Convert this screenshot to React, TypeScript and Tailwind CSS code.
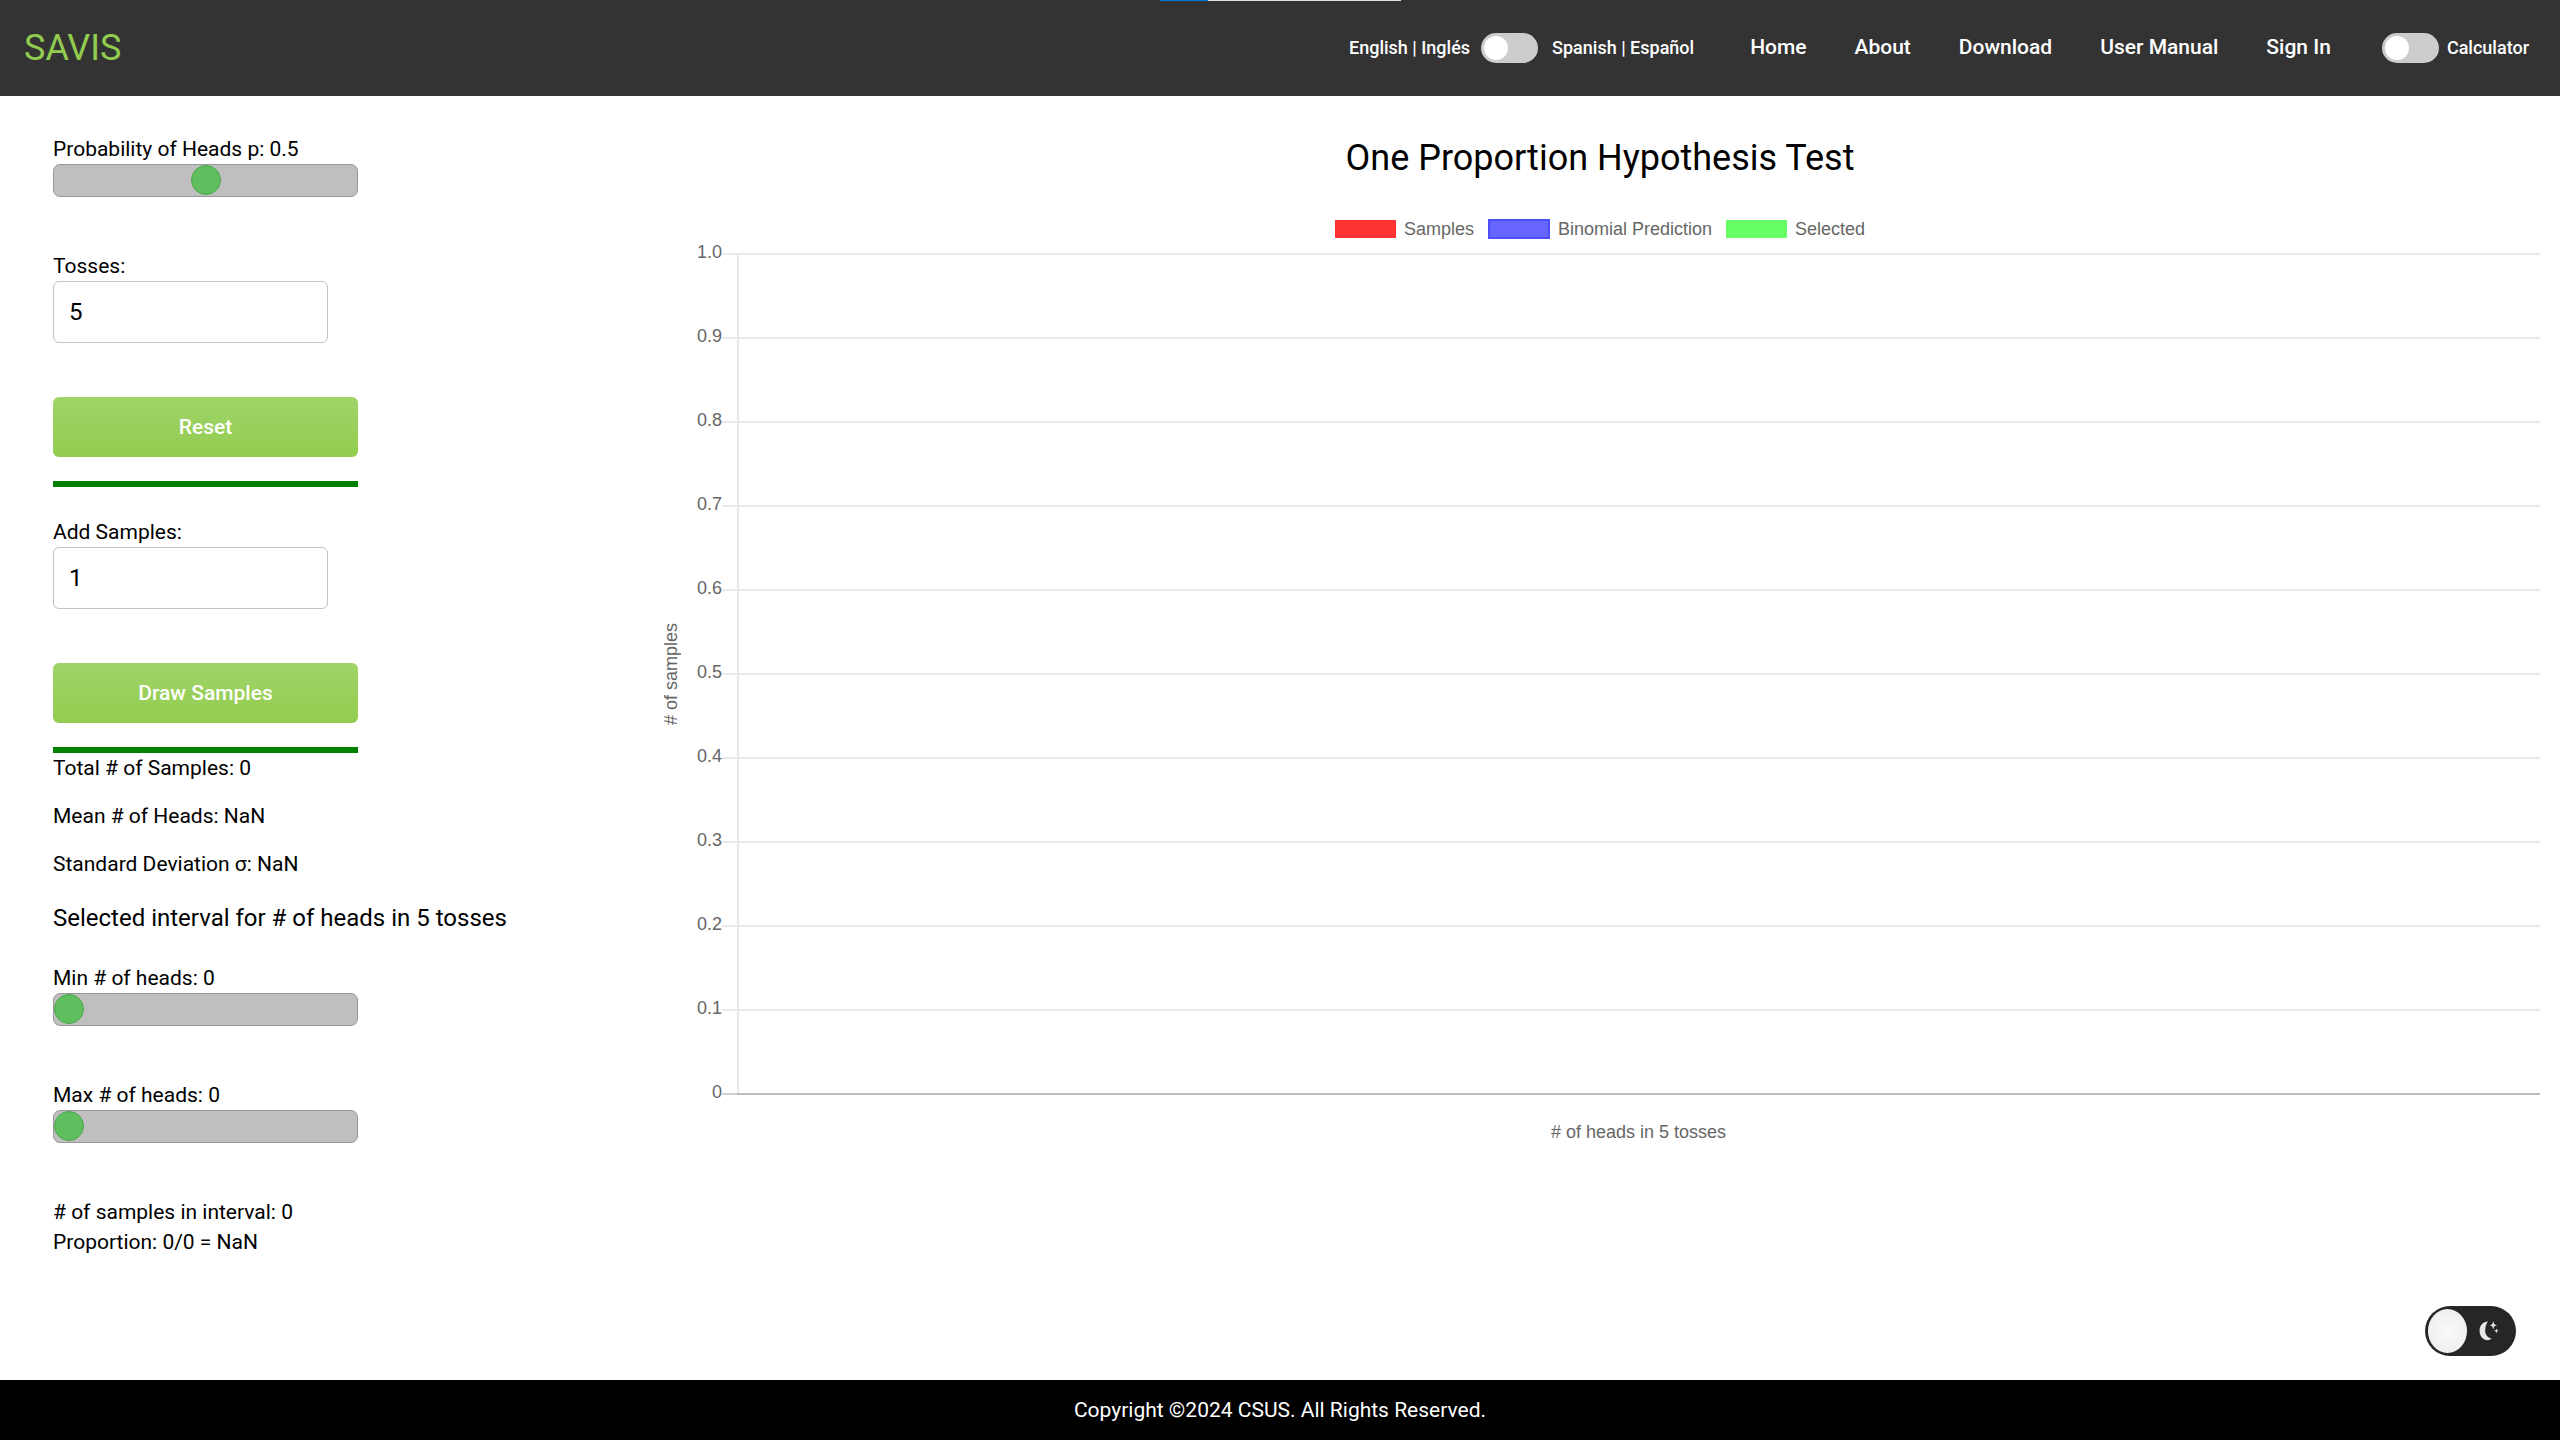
import { useState } from 'react';

const ROBOTO = "font-['Roboto',sans-serif]";
const ARIAL = "font-['Liberation_Sans',Arial,sans-serif]";

const TICKS = ['1.0', '0.9', '0.8', '0.7', '0.6', '0.5', '0.4', '0.3', '0.2', '0.1'];

function Switch({ id, label }: { id: string; label: string }) {
  return (
    <input
      id={id}
      type="checkbox"
      role="switch"
      aria-label={label}
      className="h-[30px] w-[57px] shrink-0 cursor-pointer appearance-none rounded-full bg-[#ccc] p-[3px] before:block before:size-6 before:rounded-full before:bg-white before:transition-transform checked:bg-[#92cc4f] checked:before:translate-x-[27px]"
    />
  );
}

function Slider(props: {
  id: string;
  label: string;
  value: number;
  max: number;
  step: number;
  onChange: (v: number) => void;
}) {
  return (
    <div className="flex flex-col">
      <label htmlFor={props.id}>
        {props.label} {props.value}
      </label>
      <input
        id={props.id}
        type="range"
        min={0}
        max={props.max}
        step={props.step}
        value={props.value}
        onChange={(e) => props.onChange(Number(e.target.value))}
        className="h-[33px] w-[305px] cursor-pointer appearance-none rounded-[7px] border border-[#989898] bg-[#bfbfbf] pb-px [&::-webkit-slider-thumb]:size-[30px] [&::-webkit-slider-thumb]:appearance-none [&::-webkit-slider-thumb]:rounded-full [&::-webkit-slider-thumb]:border [&::-webkit-slider-thumb]:border-[#4ca64c] [&::-webkit-slider-thumb]:bg-[#5fbf5f]"
      />
    </div>
  );
}

function NumberField(props: { id: string; label: string; value: number; onChange: (v: number) => void }) {
  return (
    <div className="flex flex-col">
      <label htmlFor={props.id}>{props.label}</label>
      <input
        id={props.id}
        type="number"
        value={props.value}
        onChange={(e) => props.onChange(Number(e.target.value))}
        className="h-[62px] w-[275px] rounded-md border border-[#c4c4c4] bg-white px-[15px] text-2xl"
      />
    </div>
  );
}

function ActionButton({ children }: { children: string }) {
  return (
    <button
      type="button"
      className="h-[60px] w-[305px] cursor-pointer rounded-md bg-linear-to-b from-[#a0d468] to-[#92cc4f] font-medium text-white"
    >
      {children}
    </button>
  );
}

function Header() {
  return (
    <header className="relative flex h-24 items-center justify-between bg-[#333] pr-[31px] pl-6 text-white">
      <div className="absolute top-0 left-[1160px] flex h-px w-[241px] bg-[#e0e0e0]">
        <div className="w-12 bg-[#0078d4]" />
      </div>
      <a href="#" className="text-4xl text-[#92cc4f]">
        SAVIS
      </a>
      <div className="flex items-center text-lg font-medium">
        <div className="flex items-center">
          <label htmlFor="language">English | Inglés</label>
          <span className="mr-3.5 ml-[11px] flex">
            <Switch id="language" label="Language" />
          </span>
          <label htmlFor="language">Spanish | Español</label>
        </div>
        <nav className="mr-[51px] ml-14 flex gap-12 pb-0.5 text-[21px]">
          <a href="#">Home</a>
          <a href="#">About</a>
          <a href="#">Download</a>
          <a href="#">User Manual</a>
          <a href="#">Sign In</a>
        </nav>
        <div className="flex items-center gap-2">
          <Switch id="calculator" label="Calculator" />
          <label htmlFor="calculator">Calculator</label>
        </div>
      </div>
    </header>
  );
}

function Chart({ tosses }: { tosses: number }) {
  return (
    <section className={`mt-[33px] flex min-w-0 flex-1 flex-col px-5 text-lg leading-[18px] text-[#666] ${ARIAL}`}>
      <ul className="flex items-center justify-center gap-3.5">
        <li className="flex items-center gap-2">
          <span className="h-[18px] w-[61px] bg-[#ff3333]" />
          Samples
        </li>
        <li className="flex items-center gap-2">
          <span className="h-5 w-[62px] border-2 border-[#4d4dfa] bg-[#6666ff]" />
          Binomial Prediction
        </li>
        <li className="flex items-center gap-2">
          <span className="h-[18px] w-[61px] bg-[#66ff66]" />
          Selected
        </li>
      </ul>
      <div className="mt-3.5 flex">
        <div className="flex w-[22px] items-center justify-center pb-[46px]">
          <span className="rotate-180 whitespace-nowrap [writing-mode:vertical-rl]"># of samples</span>
        </div>
        <div className="flex-1">
          {TICKS.map((t) => (
            <div key={t} className="flex h-[84px]">
              <span className="-mt-2.5 h-[18px] w-10 text-right">{t}</span>
              <span className="w-[15px] border-t-2 border-[#e9e9e9]" />
              <span className="flex-1 border-t-2 border-l-2 border-[#e9e9e9]" />
            </div>
          ))}
          <div className="flex">
            <span className="-mt-2.5 h-[18px] w-10 text-right">0</span>
            <span className="h-0.5 w-[15px] bg-[#cfcfcf]" />
            <span className="h-0.5 flex-1 bg-[#bcbcbc]" />
          </div>
          <p className="mt-[22px] pl-[55px] text-center"># of heads in {tosses} tosses</p>
        </div>
      </div>
    </section>
  );
}

function ThemeToggle() {
  return (
    <button
      type="button"
      aria-label="Toggle dark mode"
      className="fixed right-11 bottom-[84px] flex h-[50px] w-[91px] cursor-pointer items-center rounded-full bg-[#262626] pl-[3px]"
    >
      <span className="h-11 w-[39px] rounded-[50%] bg-radial from-[#fafafa] to-[#ebebeb]" />
      <svg viewBox="0 0 20 20" className="ml-3 size-5 fill-[#e8e8e8]" aria-hidden="true">
        <path d="M9 0.6C4 0.6 0.6 4.6 0.6 9.8C0.6 15 4 19.2 8.6 19.2C10.2 19.2 11.6 18.6 12.6 17.6C8.6 17 6.2 13.8 6.2 9.6C6.2 6 7.2 2.6 9 0.6Z" />
        <path d="M14.2 0.2L15.2 3.2L18 4.2L15.2 5.2L14.2 8.4L13.2 5.2L10.8 4.2L13.2 3.2Z" />
        <path d="M17.4 7.4L18 9.2L19.8 9.8L18 10.4L17.4 12.2L16.8 10.4L15 9.8L16.8 9.2Z" />
      </svg>
    </button>
  );
}

export default function App() {
  const [p, setP] = useState(0.5);
  const [tosses, setTosses] = useState(5);
  const [draws, setDraws] = useState(1);
  const [min, setMin] = useState(0);
  const [max, setMax] = useState(0);

  return (
    <div className={`flex min-h-screen flex-col bg-white text-[21px] leading-[30px] text-black ${ROBOTO}`}>
      <Header />
      <main className="flex flex-1">
        <aside className="flex w-1/4 flex-col items-start pt-[38px] pl-[53px]">
          <Slider id="prob" label="Probability of Heads p:" value={p} max={1} step={0.1} onChange={setP} />
          <div className="mt-[54px] flex flex-col gap-[54px]">
            <NumberField id="tosses" label="Tosses:" value={tosses} onChange={setTosses} />
            <ActionButton>Reset</ActionButton>
          </div>
          <hr className="mt-6 h-1.5 w-[305px] border-0 bg-[#008000]" />
          <div className="mt-[30px] flex flex-col gap-[54px]">
            <NumberField id="draws" label="Add Samples:" value={draws} onChange={setDraws} />
            <ActionButton>Draw Samples</ActionButton>
          </div>
          <hr className="mt-6 h-1.5 w-[305px] border-0 bg-[#008000]" />
          <div className="flex flex-col gap-[18px]">
            <p>Total # of Samples: 0</p>
            <p>Mean # of Heads: NaN</p>
            <p>Standard Deviation σ: NaN</p>
          </div>
          <h2 className="mt-[21px] text-2xl leading-9">Selected interval for # of heads in {tosses} tosses</h2>
          <div className="mt-[27px] flex flex-col gap-[54px]">
            <Slider id="min" label="Min # of heads:" value={min} max={tosses} step={1} onChange={setMin} />
            <Slider id="max" label="Max # of heads:" value={max} max={tosses} step={1} onChange={setMax} />
            <div>
              <p># of samples in interval: 0</p>
              <p>Proportion: 0/0 = NaN</p>
            </div>
          </div>
        </aside>
        <div className="flex min-w-0 flex-1 flex-col pt-[34px]">
          <h1 className="text-center text-4xl leading-[56px]">One Proportion Hypothesis Test</h1>
          <Chart tosses={tosses} />
        </div>
      </main>
      <footer className="flex h-[60px] items-center justify-center bg-black text-white">
        Copyright ©2024 CSUS. All Rights Reserved.
      </footer>
      <ThemeToggle />
    </div>
  );
}
